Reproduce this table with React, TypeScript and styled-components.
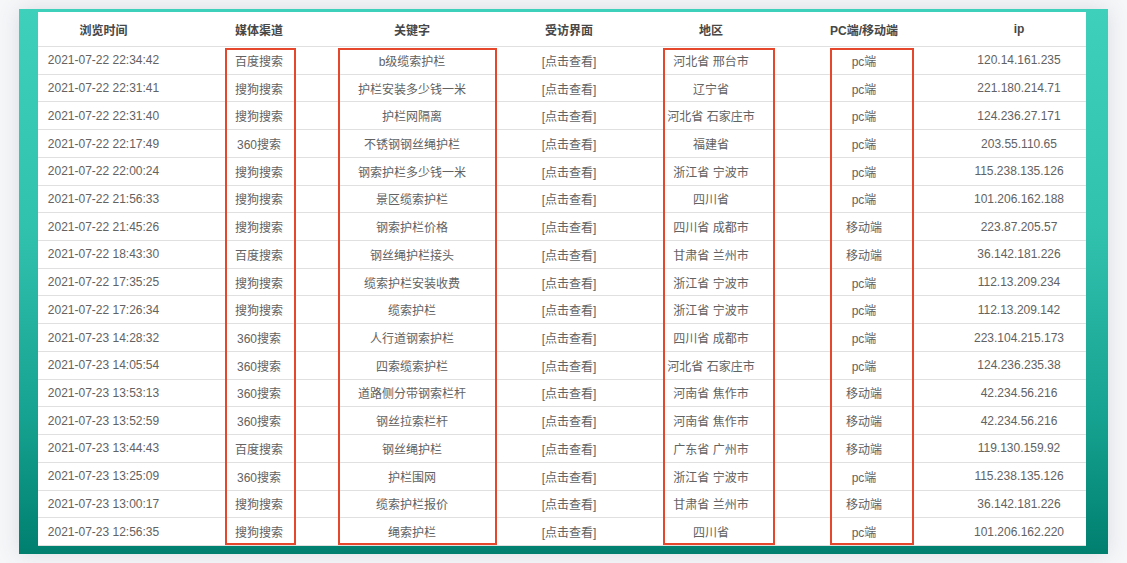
import React from "react";
import styled, { createGlobalStyle } from "styled-components";

const GlobalStyle = createGlobalStyle`
  html, body {
    margin: 0;
    padding: 0;
    background: #f6f7f9;
  }
  body {
    font-family: "Liberation Sans", "Noto Sans CJK SC", sans-serif;
  }
`;

const COLS = [144, 154, 155, 150, 147, 154, 144];
const SHIFT = [-6.5, 0, -1.5, 3, -3.5, -1, 5];

const Page = styled.div`
  width: 1127px;
  height: 563px;
  padding: 9px 0 0 19px;
  box-sizing: border-box;
`;

const Panel = styled.div`
  width: 1089px;
  height: 545px;
  box-sizing: border-box;
  padding: 3px 22px 8px 19px;
  background: linear-gradient(to bottom, #3fd0bc 0%, #31c2ae 40%, #16a290 75%, #007f6f 100%);
  box-shadow: 0 0 20px rgba(60, 80, 100, 0.16);
`;

const Sheet = styled.div`
  position: relative;
  width: 1048px;
  height: 534px;
  background: #ffffff;
  display: flex;
  flex-direction: column;
  overflow: hidden;
`;

const Row = styled.div<{ $head?: boolean }>`
  display: grid;
  grid-template-columns: ${COLS.map((c) => `${c}px`).join(" ")};
  height: ${(p) => (p.$head ? "35px" : "27.72px")};
  box-sizing: border-box;
  border-bottom: 1px solid #e0e0e0;
  align-items: center;
  font-size: 12px;
  font-weight: ${(p) => (p.$head ? 700 : 400)};
  color: ${(p) => (p.$head ? "#474747" : "#626262")};
`;

const Cell = styled.div<{ $shift: number }>`
  text-align: center;
  white-space: nowrap;
  padding-left: ${(p) => (p.$shift > 0 ? p.$shift * 2 : 0)}px;
  padding-right: ${(p) => (p.$shift < 0 ? -p.$shift * 2 : 0)}px;
`;

const Mark = styled.div<{ $left: number; $width: number }>`
  position: absolute;
  top: 36px;
  height: 497px;
  left: ${(p) => p.$left}px;
  width: ${(p) => p.$width}px;
  box-sizing: border-box;
  border: 2px solid #e5472d;
  pointer-events: none;
`;

const HEAD = ["浏览时间", "媒体渠道", "关键字", "受访界面", "地区", "PC端/移动端", "ip"];

const DATA: string[][] = [
  ["2021-07-22 22:34:42", "百度搜索", "b级缆索护栏", "河北省 邢台市", "pc端", "120.14.161.235"],
  ["2021-07-22 22:31:41", "搜狗搜索", "护栏安装多少钱一米", "辽宁省", "pc端", "221.180.214.71"],
  ["2021-07-22 22:31:40", "搜狗搜索", "护栏网隔离", "河北省 石家庄市", "pc端", "124.236.27.171"],
  ["2021-07-22 22:17:49", "360搜索", "不锈钢钢丝绳护栏", "福建省", "pc端", "203.55.110.65"],
  ["2021-07-22 22:00:24", "搜狗搜索", "钢索护栏多少钱一米", "浙江省 宁波市", "pc端", "115.238.135.126"],
  ["2021-07-22 21:56:33", "搜狗搜索", "景区缆索护栏", "四川省", "pc端", "101.206.162.188"],
  ["2021-07-22 21:45:26", "搜狗搜索", "钢索护栏价格", "四川省 成都市", "移动端", "223.87.205.57"],
  ["2021-07-22 18:43:30", "百度搜索", "钢丝绳护栏接头", "甘肃省 兰州市", "移动端", "36.142.181.226"],
  ["2021-07-22 17:35:25", "搜狗搜索", "缆索护栏安装收费", "浙江省 宁波市", "pc端", "112.13.209.234"],
  ["2021-07-22 17:26:34", "搜狗搜索", "缆索护栏", "浙江省 宁波市", "pc端", "112.13.209.142"],
  ["2021-07-23 14:28:32", "360搜索", "人行道钢索护栏", "四川省 成都市", "pc端", "223.104.215.173"],
  ["2021-07-23 14:05:54", "360搜索", "四索缆索护栏", "河北省 石家庄市", "pc端", "124.236.235.38"],
  ["2021-07-23 13:53:13", "360搜索", "道路侧分带钢索栏杆", "河南省 焦作市", "移动端", "42.234.56.216"],
  ["2021-07-23 13:52:59", "360搜索", "钢丝拉索栏杆", "河南省 焦作市", "移动端", "42.234.56.216"],
  ["2021-07-23 13:44:43", "百度搜索", "钢丝绳护栏", "广东省 广州市", "移动端", "119.130.159.92"],
  ["2021-07-23 13:25:09", "360搜索", "护栏围网", "浙江省 宁波市", "pc端", "115.238.135.126"],
  ["2021-07-23 13:00:17", "搜狗搜索", "缆索护栏报价", "甘肃省 兰州市", "移动端", "36.142.181.226"],
  ["2021-07-23 12:56:35", "搜狗搜索", "绳索护栏", "四川省", "pc端", "101.206.162.220"],
];

const MARKS = [
  { left: 187, width: 71 },
  { left: 300, width: 159 },
  { left: 625, width: 112 },
  { left: 792, width: 84 },
];

export default function App() {
  return (
    <>
      <GlobalStyle />
      <Page>
        <Panel>
          <Sheet>
            <Row $head>
              {HEAD.map((h, i) => (
                <Cell key={i} $shift={SHIFT[i]}>
                  {h}
                </Cell>
              ))}
            </Row>
            {DATA.map((r, ri) => {
              const cells = [r[0], r[1], r[2], "[点击查看]", r[3], r[4], r[5]];
              return (
                <Row key={ri}>
                  {cells.map((c, i) => (
                    <Cell key={i} $shift={SHIFT[i]}>
                      {c}
                    </Cell>
                  ))}
                </Row>
              );
            })}
            {MARKS.map((m, i) => (
              <Mark key={i} $left={m.left} $width={m.width} />
            ))}
          </Sheet>
        </Panel>
      </Page>
    </>
  );
}
